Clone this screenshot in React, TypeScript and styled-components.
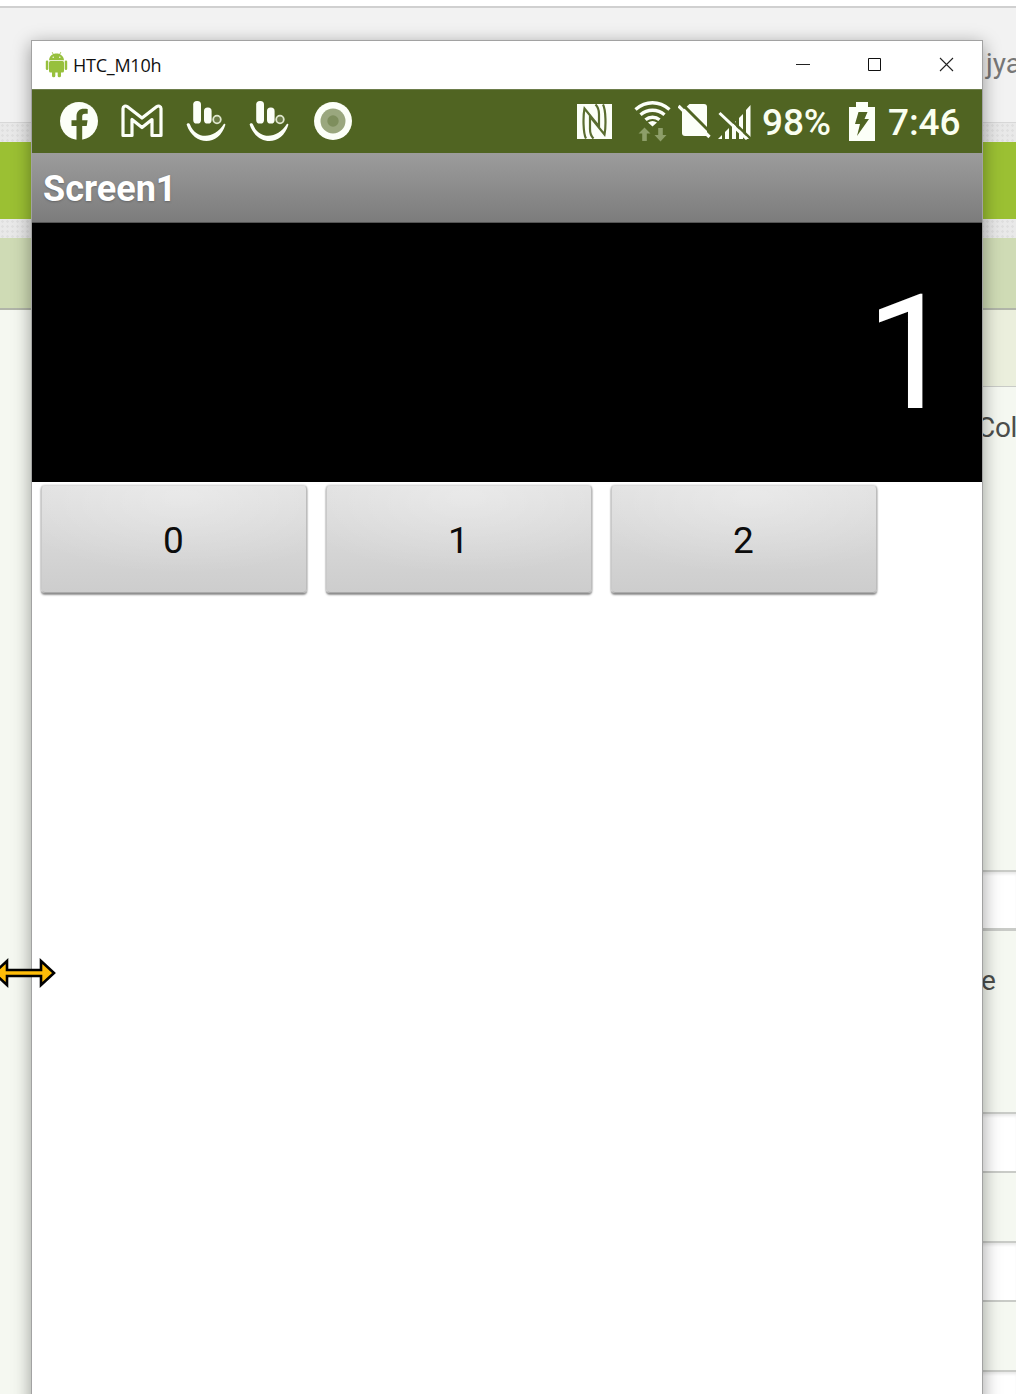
import React from "react";
import styled, { createGlobalStyle } from "styled-components";

const GlobalStyle = createGlobalStyle`
  *, *::before, *::after { box-sizing: border-box; }
  body { margin: 0; background: #fff; overflow: hidden; }
`;

const Desktop = styled.div`
  position: relative;
  width: 1016px;
  height: 1394px;
  overflow: hidden;
  background: #fff;
`;

/* Browser page behind the mirrored phone */
const Page = styled.div`
  display: flex;
  flex-direction: column;
  height: 100%;
`;

const Header = styled.header`
  display: flex;
  justify-content: flex-end;
  align-items: center;
  flex: none;
  height: 117px;
  margin-top: 6px;
  padding-bottom: 2px;
  background: #f2f2f2;
  border-top: 2px solid #d0d0d0;
  border-bottom: 1px solid #d8d8d8;
`;

const Account = styled.span`
  width: 30px;
  overflow: visible;
  white-space: nowrap;
  font: 28px/36px Roboto, sans-serif;
  color: #777;
`;

const Texture = styled.div<{ $h: number }>`
  flex: none;
  height: ${(p) => p.$h}px;
  background-color: #e9e9e9;
  background-image: radial-gradient(circle, #dfdfdf 1px, transparent 1.5px);
  background-size: 5px 5px;
`;

const Band = styled.div<{ $h: number; $bg: string; $line?: string }>`
  flex: none;
  height: ${(p) => p.$h}px;
  background: ${(p) => p.$bg};
  border-bottom: ${(p) => (p.$line ? `2px solid ${p.$line}` : "none")};
`;

const Workspace = styled.div`
  display: grid;
  grid-template-columns: 1fr 40px;
  flex: 1;
  min-height: 0;
  background: #f5f8f1;
`;

const Panel = styled.aside`
  grid-column: 2;
  display: flex;
  flex-direction: column;
  overflow: hidden;
`;

const Field = styled.div<{ $h: number; $tone?: "head" | "input"; $line?: number; $top?: number; $left?: number }>`
  flex: none;
  height: ${(p) => p.$h}px;
  padding: ${(p) => p.$top ?? 0}px 0 0 ${(p) => p.$left ?? 0}px;
  background: ${(p) => (p.$tone === "head" ? "#ebefdd" : p.$tone === "input" ? "#fff" : "#f5f8f1")};
  border-bottom: ${(p) => p.$line ?? 2}px solid #c9cbc7;
  box-shadow: ${(p) => (p.$tone === "input" ? "inset 0 3px 3px -1px #e8e8e8" : "none")};
  font: 28px/36px Roboto, sans-serif;
  letter-spacing: -0.3px;
  white-space: nowrap;
  color: #4c4e4b;
`;

/* Mirrored phone window */
const Window = styled.section`
  position: absolute;
  left: 31px;
  top: 40px;
  width: 952px;
  height: 1400px;
  display: flex;
  flex-direction: column;
  background: #fff;
  border: 1px solid #a2a2a2;
  box-shadow: 0 4px 17px rgba(0, 0, 0, 0.38);
`;

const TitleBar = styled.div`
  display: flex;
  align-items: center;
  flex: none;
  height: 48px;
  padding: 0 28px 0 13px;
`;

const Title = styled.span`
  flex: 1;
  margin-left: 5px;
  font: 18px/24px "Open Sans", "Noto Sans", sans-serif;
  letter-spacing: -0.25px;
  color: #111;
`;

const Controls = styled.div`
  display: flex;
  align-items: center;
  gap: 57px;
  padding-bottom: 2px;
`;

const StatusBar = styled.div`
  display: flex;
  align-items: center;
  justify-content: space-between;
  flex: none;
  height: 64px;
  padding: 0 22px 0 27px;
  background: #506422;
  border-top: 1px solid #6d7d4b;
`;

const Notifications = styled.div`
  display: flex;
  align-items: center;
  gap: 23.4px;
  padding-bottom: 1px;
`;

const System = styled.div`
  display: flex;
  align-items: center;
  padding-bottom: 1px;
`;

const Glyph = styled.svg<{ $ml?: number; $mr?: number }>`
  display: block;
  flex: none;
  margin-left: ${(p) => p.$ml ?? 0}px;
  margin-right: ${(p) => p.$mr ?? 0}px;
`;

const StatusText = styled.span<{ $w: number; $ml: number }>`
  width: ${(p) => p.$w}px;
  margin-left: ${(p) => p.$ml}px;
  padding-top: 3px;
  font: 500 37px/44px Roboto, sans-serif;
  letter-spacing: -0.1px;
  white-space: nowrap;
  color: #fafff0;
`;

const AppBar = styled.h1`
  display: flex;
  align-items: center;
  flex: none;
  height: 70px;
  margin: 0;
  padding: 2px 0 0 11px;
  background: linear-gradient(#9c9c9c, #7c7c7c);
  border-bottom: 1px solid #555;
  font: 700 36px/44px Roboto, sans-serif;
  color: #fff;
  text-shadow: 0 1px 2px rgba(80, 80, 80, 0.6);
`;

const Display = styled.output`
  display: flex;
  justify-content: flex-end;
  align-items: center;
  flex: none;
  height: 259px;
  padding: 2px 27px 0 0;
  background: #000;
  font: 400 159px/190px Roboto, sans-serif;
  color: #fff;
`;

const Keys = styled.div`
  display: flex;
  gap: 19px;
  padding: 3px 0 0 9px;
`;

const Key = styled.button`
  width: 266px;
  height: 108px;
  padding: 3px 1px 0 0;
  border: 1px solid;
  border-color: #dcdcdc #bdbdbd #aaa #c9c9c9;
  border-radius: 4px;
  background: radial-gradient(ellipse 70% 75% at 53% 8%, rgba(255, 255, 255, 0.3), transparent),
    linear-gradient(#e1e1e1, #cdcdcd);
  box-shadow: 0 2px 2px rgba(0, 0, 0, 0.42), 0 0 2px rgba(0, 0, 0, 0.25);
  font: 400 37px/44px Roboto, sans-serif;
  color: #0c0c0c;
`;

const Pointer = styled.svg`
  position: absolute;
  left: -8px;
  top: 957px;
`;

const AndroidIcon = () => (
  <Glyph width="23" height="26" viewBox="0 0 23 26" fill="#97c03d">
    <path d="M4 8.200C4.200 5 6.200 3.200 8 2.300L6.700.4l.6-.3 1.400 1.900c1.800-.6 3.800-.6 5.600 0L15.700.1l.6.3L15 2.300c2 1 3.800 2.800 4 5.900z" />
    <rect x="4" y="9" width="15" height="11.500" rx="1.500" />
    <rect x=".8" y="8.600" width="2.500" height="9.400" rx="1.200" />
    <rect x="19.700" y="8.600" width="2.500" height="9.400" rx="1.200" />
    <rect x="7" y="18" width="3.300" height="7.200" rx="1.500" />
    <rect x="12.700" y="18" width="3.300" height="7.200" rx="1.500" />
    <circle cx="8.200" cy="5.300" r=".7" fill="#fff" />
    <circle cx="14.800" cy="5.300" r=".7" fill="#fff" />
  </Glyph>
);

const FacebookIcon = () => (
  <Glyph width="40" height="40" viewBox="0 0 40 40">
    <circle cx="20" cy="20" r="19" fill="#fcfff8" />
    <path d="M17.500 40V25h-5v-5.700h5v-4c0-5 3-7.600 7.400-7.600 1.600 0 3.200.2 3.800.4v4.700h-2.500c-2.300 0-3 1.300-3 2.900v3.600h5.400l-.9 5.700h-4.500v15z" fill="#506422" />
  </Glyph>
);

const GmailIcon = () => (
  <Glyph $ml={-1} $mr={-1} width="42" height="34" viewBox="0 0 42 34" fill="none" stroke="#fcfff8" strokeWidth="3.200" strokeLinejoin="round">
    <path d="M2 4.500C2 2 4.500 1.300 6.500 2.800L21 14 35.500 2.800C37.500 1.300 40 2 40 4.500V31.500h-9V15.500L21 23.500 11 15.500v16H2z" />
  </Glyph>
);

const TouchIcon = () => (
  <Glyph width="40" height="42" viewBox="0 0 40 42">
    <rect x="7.200" y="1" width="7.800" height="22.500" rx="3.600" fill="#fcfff8" />
    <rect x="18" y="7.500" width="7.600" height="16" rx="3.600" fill="#fcfff8" />
    <circle cx="31" cy="19.500" r="3.800" fill="#6b7b46" stroke="#dfe7cd" strokeWidth="1.800" />
    <path d="M.6 24.500C1.300 22.800 3.400 23 4 24.500 10 40 28.500 39.500 38 23.800q1.300-.3 1.400 1C33 46.500 8 46.500.6 24.500z" fill="#fcfff8" />
  </Glyph>
);

const RecordIcon = () => (
  <Glyph width="40" height="40" viewBox="0 0 40 40">
    <circle cx="20" cy="20" r="19" fill="#fcfff8" />
    <circle cx="20" cy="20" r="12.500" fill="#9aa77e" />
    <circle cx="20" cy="20" r="5.700" fill="#7e8e5d" />
  </Glyph>
);

const NfcIcon = () => (
  <Glyph width="35" height="35" viewBox="0 0 35 35">
    <path d="M0 0h35v35H0z" fill="#fcfff8" />
    <path
      d="M9 34.500C6 29 6 12 7.500 4.500L22 22.500V10C22 6 21 3 18.500.5M26 .5C29 6 29 23 27.500 30.500L13 12.500V25C13 29 14 32 16.500 34.500"
      fill="none"
      stroke="#5a6d30"
      strokeWidth="2.200"
    />
  </Glyph>
);

const WifiIcon = () => (
  <Glyph $ml={22} width="37" height="41" viewBox="0 0 37 41">
    <g fill="none" stroke="#fcfff8" strokeWidth="3.400">
      <path d="M1.500 8.500C12-.5 25-.5 35.500 8.500" />
      <path d="M6.500 13.800c7-6 17-6 24 0" />
      <path d="M11.500 18.800c4-3.500 10-3.500 14 0" />
    </g>
    <path d="M14 21.500c3-2 6-2 9 0l-4.500 4z" fill="#fcfff8" />
    <path d="M10.500 26.500l6 6h-3.700V40H8.200v-7.500H4.500zM26.500 40.500l6-6.500h-3.700v-7h-4.600v7h-3.700z" fill="#8d9e69" />
  </Glyph>
);

const NoSimIcon = () => (
  <Glyph $ml={7} width="33" height="36" viewBox="0 0 33 36">
    <path d="M11.500 1H26q3 0 3 3v28.500q0 .5-1 .5H7q-3 0-3-3V8z" fill="#fcfff8" />
    <path d="M3 0L35 32" stroke="#506422" strokeWidth="3" />
    <path d="M.5 3L31.500 34" stroke="#fcfff8" strokeWidth="3.200" />
  </Glyph>
);

const NoSignalIcon = () => (
  <Glyph $ml={7} width="33" height="37" viewBox="0 0 33 37">
    <path d="M0 36l4-4v4zM7 29l4-4V36H7zM14 22l4-4V36h-4zM21 15l4-4V36h-4zM28 7l4.500-5v34H28z" fill="#fcfff8" />
    <path d="M4 8L33 36" stroke="#506422" strokeWidth="2.500" />
    <path d="M1.500 10L29 36" stroke="#fcfff8" strokeWidth="3" />
  </Glyph>
);

const BatteryIcon = () => (
  <Glyph $ml={19} width="26" height="39" viewBox="0 0 26 39">
    <path d="M7 0h12v5h7v34H0V5h7z" fill="#fcfff8" />
    <path d="M9.500 10h9L15.500 17h4.500L8 34l3-12H6z" fill="#506422" />
  </Glyph>
);

const fields = [
  { h: 77, tone: "head" as const, line: 1 },
  { h: 485, text: "Col", top: 23, left: 1 },
  { h: 59, tone: "input" as const, line: 3 },
  { h: 183, text: "e", top: 32, left: 5 },
  { h: 59, tone: "input" as const },
  { h: 70 },
  { h: 59, tone: "input" as const },
  { h: 70 },
  { h: 60, tone: "input" as const },
];

export default function App() {
  return (
    <Desktop>
      <GlobalStyle />
      <Page>
        <Header>
          <Account>jya</Account>
        </Header>
        <Texture $h={19} />
        <Band $h={77} $bg="#9bc033" />
        <Texture $h={19} />
        <Band $h={72} $bg="#cfdbb5" $line="#b1b5a9" />
        <Workspace>
          <Panel>
            {fields.map((f, i) => (
              <Field key={i} $h={f.h} $tone={f.tone} $line={f.line} $top={f.top} $left={f.left}>
                {f.text}
              </Field>
            ))}
          </Panel>
        </Workspace>
      </Page>

      <Window>
        <TitleBar>
          <AndroidIcon />
          <Title>HTC_M10h</Title>
          <Controls>
            <Glyph width="14" height="14" viewBox="0 0 14 14"><path d="M0 7.500h14" stroke="#222" /></Glyph>
            <Glyph width="15" height="15" viewBox="0 0 15 15"><path d="M1.500 1.500h12v12h-12z" fill="none" stroke="#111" /></Glyph>
            <Glyph width="15" height="15" viewBox="0 0 15 15"><path d="M1 1l13 13M14 1L1 14" stroke="#222" strokeWidth="1.100" /></Glyph>
          </Controls>
        </TitleBar>
        <StatusBar>
          <Notifications>
            <FacebookIcon />
            <GmailIcon />
            <TouchIcon />
            <TouchIcon />
            <RecordIcon />
          </Notifications>
          <System>
            <NfcIcon />
            <WifiIcon />
            <NoSimIcon />
            <NoSignalIcon />
            <StatusText $w={68} $ml={11}>98%</StatusText>
            <BatteryIcon />
            <StatusText $w={72} $ml={13}>7:46</StatusText>
          </System>
        </StatusBar>
        <AppBar>Screen1</AppBar>
        <Display>1</Display>
        <Keys>
          <Key>0</Key>
          <Key>1</Key>
          <Key>2</Key>
        </Keys>
      </Window>

      <Pointer width="66" height="32" viewBox="0 0 66 32">
        <path d="M2 16L15 4v9h34V4l13 12-13 12v-9H15v9z" fill="#ffbd08" stroke="#000" strokeWidth="2.600" />
      </Pointer>
    </Desktop>
  );
}
